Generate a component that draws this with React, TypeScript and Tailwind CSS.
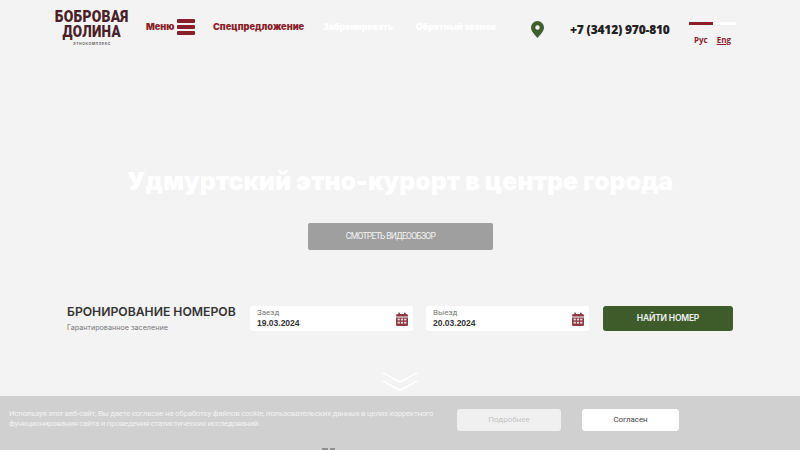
import React from "react";

const Calendar = () => (
  <svg width="12" height="14" viewBox="0 0 12 14" className="shrink-0">
    <rect x="2.4" y="0.5" width="1.6" height="3" rx="0.6" fill="#8a3a44" />
    <rect x="8" y="0.5" width="1.6" height="3" rx="0.6" fill="#8a3a44" />
    <path d="M1.5 2h9A1.5 1.5 0 0 1 12 3.5V4.6H0V3.5A1.5 1.5 0 0 1 1.5 2Z" fill="#8a3a44" />
    <path d="M0 5.4h12v7A1.5 1.5 0 0 1 10.5 14h-9A1.5 1.5 0 0 1 0 12.4Z" fill="#8a3a44" />
    <g fill="#f3dfe1">
      <rect x="1.6" y="6.6" width="2.2" height="1.8" />
      <rect x="4.9" y="6.6" width="2.2" height="1.8" />
      <rect x="8.2" y="6.6" width="2.2" height="1.8" />
      <rect x="1.6" y="9.8" width="2.2" height="1.8" />
      <rect x="4.9" y="9.8" width="2.2" height="1.8" />
      <rect x="8.2" y="9.8" width="2.2" height="1.8" />
    </g>
  </svg>
);

const DateField = ({ label, value }: { label: string; value: string }) => (
  <div className="flex h-[25px] w-[163px] items-center justify-between rounded-[3px] bg-white pl-[7px] pr-[5px]">
    <div className="flex flex-col pb-[2px]">
      <span className="font-['Roboto',sans-serif] text-[8px] leading-[11px] text-[#777]">{label}</span>
      <span className="font-['Liberation_Sans',sans-serif] text-[8.5px] font-bold leading-[11px] text-[#333]">{value}</span>
    </div>
    <Calendar />
  </div>
);

export default function App() {
  return (
    <div className="relative h-[450px] w-[800px] overflow-hidden bg-[#f3f3f3] font-['Inter',sans-serif]">
      <header className="flex h-[55px] items-start pl-[55px]">
        <div className="flex w-[74px] shrink-0 flex-col items-center pt-[10px] text-[#4a2127]">
          <span className="scale-x-[0.865] font-['Roboto',sans-serif] text-[16px] font-black leading-[14px] tracking-[0.3px] whitespace-nowrap">БОБРОВАЯ</span>
          <span className="scale-x-[0.84] font-['Roboto',sans-serif] text-[16px] font-black leading-[15px] tracking-[0.4px] whitespace-nowrap">ДОЛИНА</span>
          <span className="mt-[3px] text-[3.5px] font-semibold leading-[4px] tracking-[0.6px] text-[#555] whitespace-nowrap">ЭТНОКОМПЛЕКС</span>
        </div>
        <nav className="flex items-center pt-[19px] text-[9.2px] font-black leading-[16px] whitespace-nowrap">
          <span className="ml-[17px] w-[26px] text-[#8a1f2b]">Меню</span>
          <span className="ml-[5px] flex w-[18px] flex-col gap-[2px]">
            <span className="h-[4px] rounded-[1px] bg-[#8a1f2b]" />
            <span className="h-[4px] rounded-[1px] bg-[#8a1f2b]" />
            <span className="h-[4px] rounded-[1px] bg-[#8a1f2b]" />
          </span>
          <span className="ml-[18px] w-[90px] text-[#8a1f2b]">Спецпредложение</span>
          <span className="ml-[20px] w-[70px] text-[8.7px] text-white">Забронировать</span>
          <span className="ml-[23px] w-[80px] text-[8.7px] text-white">Обратный звонок</span>
        </nav>
        <svg width="13" height="17" viewBox="0 0 13 17" className="ml-[35px] mt-[21px] shrink-0">
          <path fillRule="evenodd" d="M6.5 0A6.5 6.5 0 0 1 13 6.5C13 10.5 8.5 14.500 6.500 17 4.500 14.500 0 10.500 0 6.500A6.500 6.500 0 0 1 6.500 0ZM6.500 4.300a2.200 2.200 0 1 0 0 4.400 2.200 2.200 0 0 0 0-4.400Z" fill="#3f5f2c" />
        </svg>
        <span className="ml-[26px] mt-[21px] w-[101px] font-['Open_Sans',sans-serif] text-[12px] font-extrabold leading-[17px] tracking-[-0.2px] text-[#222] whitespace-nowrap">+7 (3412) 970-810</span>
        <div className="ml-[18px] mt-[22px] flex w-[47px] flex-col">
          <div className="flex">
            <span className="h-[3px] w-[24px] bg-[#8a1f2b]" />
            <span className="h-[3px] w-[23px] bg-white" />
          </div>
          <div className="mt-[9px] flex pl-[5px] font-['Open_Sans',sans-serif] text-[8px] font-bold leading-[12px] text-[#8a1f2b]">
            <span>Рус</span>
            <span className="ml-[9px] underline">Eng</span>
          </div>
        </div>
      </header>

      <main className="flex flex-col items-center">
        <h1 className="mt-[111px] font-['Inter',sans-serif] text-[24.8px] font-black leading-[30px] text-white whitespace-nowrap">
          Удмуртский этно-курорт в центре города
        </h1>
        <button className="mt-[27px] flex h-[27px] w-[185px] items-center justify-center rounded-[2px] bg-[#9f9f9f] pr-[19px] font-['Roboto',sans-serif] text-[8.5px] tracking-[-0.7px] text-[#f4f4f4]">
          СМОТРЕТЬ ВИДЕООБЗОР
        </button>
        <section className="mt-[54px] flex w-[800px] items-center pl-[67px]">
          <div className="flex w-[183px] flex-col">
            <span className="text-[12.2px] font-semibold leading-[16px] text-[#333] whitespace-nowrap">БРОНИРОВАНИЕ НОМЕРОВ</span>
            <span className="mt-[2px] text-[7.2px] leading-[11px] text-[#777] whitespace-nowrap">Гарантированное заселение</span>
          </div>
          <DateField label="Заезд" value="19.03.2024" />
          <div className="w-[13px]" />
          <DateField label="Выезд" value="20.03.2024" />
          <button className="ml-[14px] flex h-[25px] w-[130px] items-center justify-center rounded-[3px] bg-[#3d5c2a] text-[8.5px] font-semibold tracking-[-0.2px] text-[#f4f4f4]">
            НАЙТИ НОМЕР
          </button>
        </section>
        <svg width="36" height="20" viewBox="0 0 36 20" className="mt-[39px]" fill="none" stroke="#fff" strokeWidth="1.800">
          <path d="M1 1 18 10 35 1" />
          <path d="M1 9 18 18.500 35 9" />
        </svg>
      </main>

      <div className="absolute bottom-0 left-0 right-0 flex h-[54px] items-start bg-[#d0d0d0] pl-[9px] pt-[13px]">
        <p className="w-[432px] font-['Roboto',sans-serif] text-[8px] leading-[10px] tracking-[-0.29px] text-[#f2f2f2]">
          Используя этот веб-сайт, Вы даете согласие на обработку файлов cookie, пользовательских данных в целях корректного функционирования сайта и проведения статистических исследований.
        </p>
        <button className="ml-[16px] flex h-[22px] w-[104px] items-center justify-center rounded-[3px] bg-[#f0f0f0] font-['Roboto',sans-serif] text-[8px] text-[#c4c4c4]">
          Подробнее
        </button>
        <button className="ml-[21px] flex h-[22px] w-[97px] items-center justify-center rounded-[3px] bg-white font-['Roboto',sans-serif] text-[8px] tracking-[-0.1px] text-[#444]">
          Согласен
        </button>
      </div>
      <div className="absolute bottom-0 left-[322px] flex gap-[2px]">
        <span className="h-[2px] w-[6px] bg-[#8f8f8f]" />
        <span className="h-[2px] w-[5px] bg-[#8f8f8f]" />
      </div>
    </div>
  );
}
